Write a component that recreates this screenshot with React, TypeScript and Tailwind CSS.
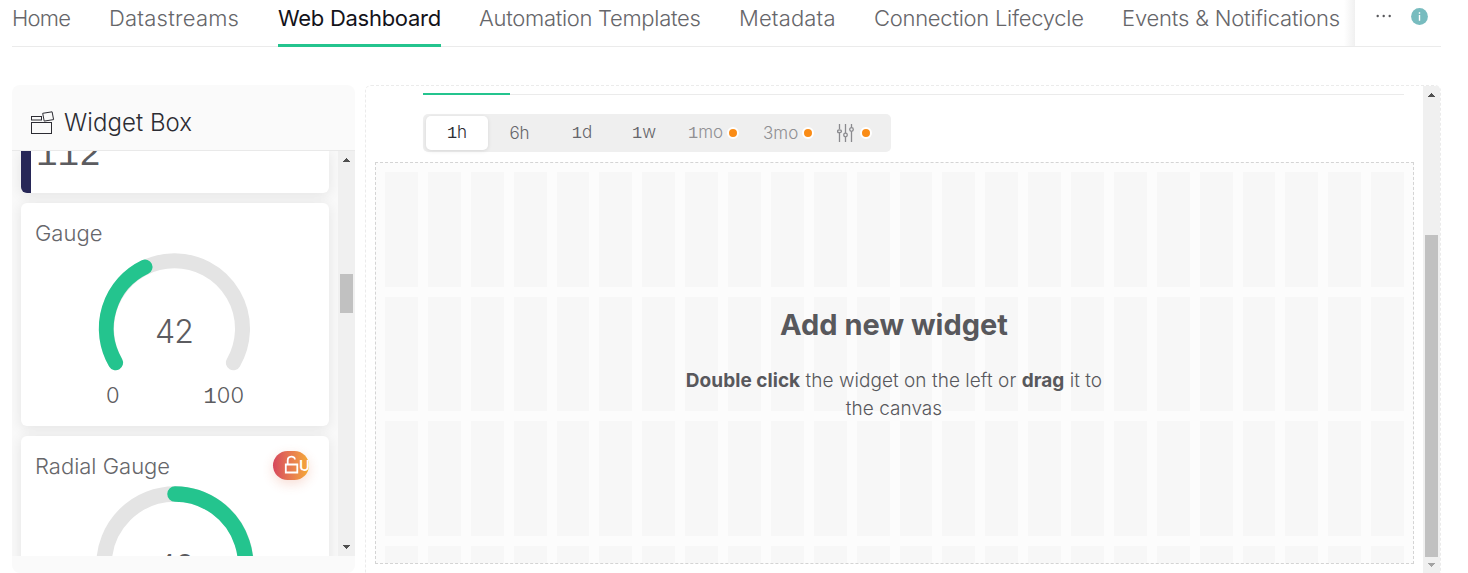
import React from "react";

const One = () => <span className="font-['Liberation_Mono',monospace] tracking-normal">1</span>;

const navItems = [
  { label: "Home", cls: "w-[58px] mr-[39px] tracking-[-0.75px]" },
  { label: "Datastreams", cls: "w-[130px] mr-[39px] tracking-[0.22px]" },
  { label: "Web Dashboard", cls: "w-[163px] mr-[38px] tracking-[-0.28px]", active: true },
  { label: "Automation Templates", cls: "w-[221px] mr-[39px] tracking-[-0.3px]" },
  { label: "Metadata", cls: "w-[96px] mr-[39px] tracking-[0.15px]" },
  { label: "Connection Lifecycle", cls: "w-[209px] mr-[39px] tracking-[-0.27px]" },
  { label: "Events & Notifications", cls: "w-[218px] tracking-[-0.19px]" },
];

function Arrow({ down, color }: { down?: boolean; color: string }) {
  return (
    <svg width="7" height="4" viewBox="0 0 7 4" fill={color} shapeRendering="crispEdges">
      <path d={down ? "M0 0h7v1H0zM1 1h5v1H1zM2 2h3v1H2zM3 3h1v1H3z" : "M0 3h7v1H0zM1 2h5v1H1zM2 1h3v1H2zM3 0h1v1H3z"} />
    </svg>
  );
}

function Nav() {
  return (
    <nav className="ml-3 flex h-[47px] w-[1429px] border-b border-[#ebebeb]">
      <div className="flex h-[47px] w-[1343px] shrink-0 overflow-hidden">
        {navItems.map((n) => (
          <a
            key={n.label}
            className={`${n.cls} block h-[47px] shrink-0 whitespace-nowrap text-[22px] leading-[36px] ${
              n.active
                ? "border-b-3 border-[#24c48e] font-normal text-[#13131a]"
                : "font-light text-[#66666a]"
            }`}
          >
            {n.label}
          </a>
        ))}
        <div className="ml-1 h-[46px] w-[11px] shrink-0 bg-linear-to-r from-transparent to-[#f0f0f0]" />
      </div>
      <div className="flex h-8 items-center pl-[21px]">
        <svg width="16" height="4" viewBox="0 0 16 4" fill="#58585c">
          <circle cx="1.7" cy="2" r="1.2" /><circle cx="7.7" cy="2" r="1.2" /><circle cx="13.7" cy="2" r="1.2" />
        </svg>
        <svg className="ml-[19px]" width="17" height="17" viewBox="0 0 17 17">
          <circle cx="8.5" cy="8.5" r="8.4" fill="#78bcbf" />
          <path d="M8.5 7v5.7M8.5 4.2v1.5" stroke="#fff" strokeWidth="1.4" />
        </svg>
      </div>
    </nav>
  );
}

function WidgetBox() {
  return (
    <aside className="flex h-[488px] w-[343px] shrink-0 flex-col overflow-hidden rounded-[8px] bg-[#fafafa]">
      <header className="flex h-[66px] shrink-0 items-center pl-[18px] pt-[9px] shadow-[inset_0_-1px_0_#e9e9e9]">
        <svg width="26" height="26" viewBox="0 0 26 26" fill="none" stroke="#2c2c33" strokeWidth="1" className="mr-[8px]">
          <rect x="1.5" y="12.5" width="20" height="11" />
          <rect x="1.5" y="6.5" width="10" height="3.5" />
          <path d="M12.7 3.3l9.4-1.5 1.5 7.8-9.4 1.5z" />
        </svg>
        <h2 className="mt-px text-[24px] font-light leading-[30px] tracking-[0.06px] text-[#2c2c33]">Widget Box</h2>
      </header>
      <div className="flex h-[405px] shrink-0 overflow-hidden">
        <div className="flex w-[326px] shrink-0 flex-col gap-[10px] overflow-hidden bg-[#f9f9f9] pl-[9px]">
          <div className="flex h-[42px] w-[308px] shrink-0 overflow-hidden rounded-b-[6px] border-l-10 border-[#272757] bg-white shadow-[0_2px_14px_rgba(0,0,0,0.09)]">
            <span className="-mt-[15px] ml-[5px] font-['Liberation_Mono',monospace] text-[36px] leading-[40px] text-[#5c5c60]">112</span>
          </div>
          <div className="flex h-[223px] w-[308px] shrink-0 flex-col rounded-[6px] bg-white shadow-[0_2px_14px_rgba(0,0,0,0.09)]">
            <h3 className="ml-[14px] mt-[15px] h-[30px] text-[22px] font-light leading-[30px] text-[#66666a]">Gauge</h3>
            <div className="relative ml-[73px] mt-[2px] h-[124px] w-[162px]">
              <svg width="162" height="124" viewBox="0 0 162 124" fill="none" strokeWidth="15" strokeLinecap="round">
                <path d="M21.6 112.7A68 68 0 1 1 139.4 112.7" stroke="#e4e4e4" />
                <path d="M21.6 112.7A68 68 0 0 1 51 17" stroke="#24c48e" />
              </svg>
              <span className="absolute inset-x-0 -ml-[2px] top-[62px] text-center text-[32px] font-light leading-[40px] tracking-[-1px] text-[#5c5c60]">42</span>
            </div>
            <div className="ml-[85px] mt-[6px] flex h-[30px] w-[138px] justify-between text-[22px] font-light leading-[30px] text-[#5c5c60]">
              <span>0</span>
              <span><One />00</span>
            </div>
          </div>
          <div className="flex h-[223px] w-[308px] shrink-0 flex-col rounded-[6px] bg-white shadow-[0_2px_14px_rgba(0,0,0,0.09)]">
            <div className="flex h-[50px] shrink-0 justify-between pl-[14px] pr-[20px] pt-[15px]">
              <h3 className="text-[22px] font-light leading-[30px] text-[#66666a]">Radial Gauge</h3>
              <div className="flex h-[29px] w-[36px] overflow-hidden rounded-full bg-linear-to-r from-[#d6465c] to-[#f5aa32] pl-[10px] pt-[4px] shadow-[0_4px_12px_rgba(220,90,50,0.2)]">
                <svg className="shrink-0" width="16" height="20" viewBox="0 0 16 20" fill="none" stroke="#fff" strokeWidth="1.8">
                  <path d="M2.8 9.5h11.5v8H2.8zM4.7 9.5V5.5c0-5 7.2-4.8 7.2-1" />
                </svg>
                <span className="text-[15px] font-semibold leading-[21px] text-white">Upgrade</span>
              </div>
            </div>
            <div className="relative ml-[73px] h-[162px] w-[162px] shrink-0">
              <svg width="162" height="162" viewBox="0 0 162 162" fill="none" strokeWidth="15.5" strokeLinecap="round">
                <circle cx="81" cy="79" r="71" stroke="#e4e4e4" />
                <path d="M81 8A71 71 0 0 1 123 136" stroke="#24c48e" />
              </svg>
              <span className="absolute inset-x-0 top-[61px] text-center text-[32px] font-light leading-[40px] tracking-[-1px] text-[#5c5c60]">42</span>
            </div>
          </div>
        </div>
        <div className="flex w-[17px] shrink-0 flex-col items-center bg-[#f0f0f0] pb-[7px] pt-[7px]">
          <Arrow color="#505050" />
          <div className="mt-[112px] h-[39px] w-[13px] bg-[#c1c1c1]" />
          <div className="mt-auto flex"><Arrow down color="#505050" /></div>
        </div>
      </div>
    </aside>
  );
}

const Dot = () => <i className="block size-[12px] shrink-0 rounded-full border-2 border-white bg-[#fa8c16]" />;

function Periods() {
  return (
    <div className="ml-[57px] mt-[19px] flex h-[38px] w-[468px] shrink-0 items-center rounded-[5px] bg-[#efefef] pl-[3px] text-[17px] font-light leading-[30px] text-[#66666a]">
      <div className="flex h-[34px] w-[62px] items-center justify-center rounded-[5px] bg-white text-[#2c2c33] shadow-[0_1px_4px_rgba(0,0,0,0.1)]"><span><One />h</span></div>
      <div className="w-[63px] text-center">6h</div>
      <div className="w-[62px] text-center"><One />d</div>
      <div className="w-[62px] text-center"><One />w</div>
      <div className="flex w-[75px] items-center pl-[13px] text-[#909093]"><span className="w-[39px]"><One />mo</span><Dot /></div>
      <div className="flex w-[75px] items-center pl-[13px] text-[#909093]"><span className="w-[39px]">3mo</span><Dot /></div>
      <div className="flex items-center pl-[12px]">
        <svg className="mr-[6px]" width="17" height="18" viewBox="0 0 17 18" fill="none" stroke="#8a8a8e" strokeWidth="1.3">
          <path d="M2.5 0v5M2.5 9v9M8.5 0v9M8.5 13v5M14.5 0v3.5M14.5 7.5V18" />
          <ellipse cx="2.5" cy="7.3" rx="2" ry="1.4" /><circle cx="8.5" cy="11" r="1.8" /><circle cx="14.5" cy="5.5" r="1.8" />
        </svg>
        <Dot />
      </div>
    </div>
  );
}

function Board() {
  return (
    <main className="flex h-[500px] w-[1076px] shrink-0 rounded-[6px] border border-dashed border-[#ebebeb]">
      <div className="flex w-[1057px] shrink-0 flex-col">
        <div className="ml-[57px] mt-[7px] flex h-[2px] w-[981px] shrink-0">
          <div className="w-[87px] bg-[#24c48e]" />
          <div className="mt-px h-px flex-1 bg-[#ebebeb]" />
        </div>
        <Periods />
        <section className="relative ml-[9px] mt-[10px] h-[402px] w-[1039px] shrink-0 border border-dashed border-[#d4d4d4] bg-[#fcfcfc] pl-[9px] pt-[9px]">
          <div className="grid h-[391px] w-[1019px] auto-rows-[114.7px] grid-cols-[repeat(24,minmax(0,1fr))] gap-x-[10px] gap-y-[9.9px] overflow-hidden">
            {Array.from({ length: 96 }, (_, i) => <div key={i} className="bg-[#f7f7f7]" />)}
          </div>
          <div className="absolute left-0 top-[142px] w-[1036px] text-center text-[#58585c]">
            <h1 className="text-[29px] font-bold leading-[40px]">Add new widget</h1>
            <p className="mx-auto mt-[22px] w-[440px] text-[19px] font-light leading-[28px] tracking-[0.04px]">
              <b className="font-bold">Double click</b> the widget on the left or <b className="font-bold">drag</b> it to<br />the canvas
            </p>
          </div>
        </section>
      </div>
      <div className="flex h-[487px] w-[17px] flex-col items-center rounded-tr-[4px] bg-[#f0f0f0] pt-[7px]">
        <Arrow color="#505050" />
        <div className="mt-[138px] h-[322px] w-[13px] shrink-0 bg-[#c1c1c1]" />
        <div className="mt-[6px] flex"><Arrow down color="#a3a3a3" /></div>
      </div>
    </main>
  );
}

export default function App() {
  return (
    <div className="h-[573px] w-[1468px] overflow-hidden bg-white font-[Inter,'Liberation_Sans',sans-serif]">
      <Nav />
      <div className="ml-3 mt-[38px] flex gap-[10px]">
        <WidgetBox />
        <Board />
      </div>
    </div>
  );
}
